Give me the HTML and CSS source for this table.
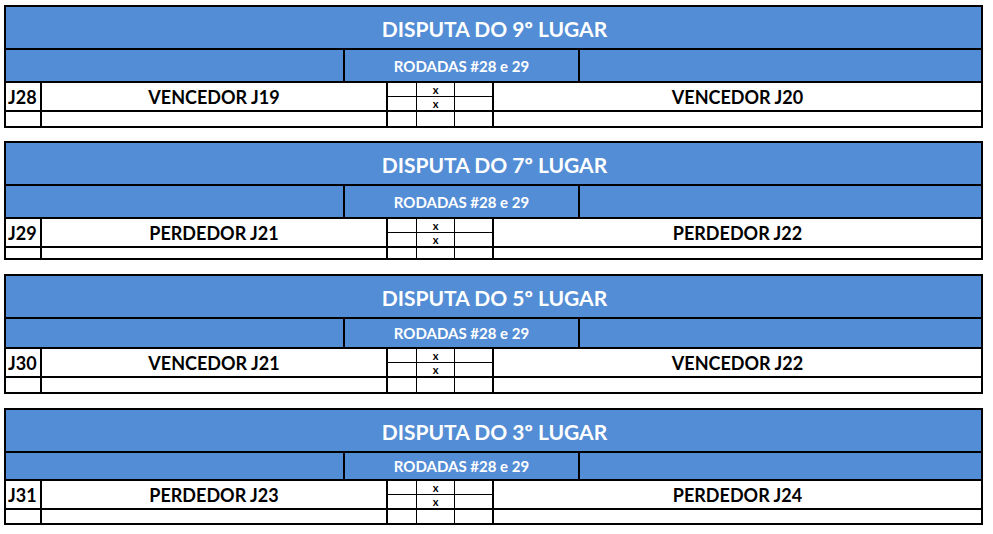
FILE: index.html
```html
<!DOCTYPE html>
<html>
<head>
<meta charset="utf-8">
<link rel="stylesheet" href="styles.css">
</head>
<body>
<div class="sheet">

  <div class="block b1">
    <div class="title">DISPUTA DO 9º LUGAR</div>
    <div class="sub"><div class="c"></div><div class="c">RODADAS #28 e 29</div><div class="c"></div></div>
    <div class="match">
      <div class="c code">J28</div>
      <div class="c name">VENCEDOR J19</div>
      <div class="c mid ma"><div class="h"></div><div class="h"></div></div>
      <div class="c mid mb"><div class="h">x</div><div class="h">x</div></div>
      <div class="c mid mc"><div class="h"></div><div class="h"></div></div>
      <div class="c name">VENCEDOR J20</div>
    </div>
    <div class="blank">
      <div class="c code"></div><div class="c name"></div><div class="c ma"></div><div class="c mb"></div><div class="c mc"></div><div class="c"></div>
    </div>
  </div>

  <div class="block b2">
    <div class="title">DISPUTA DO 7º LUGAR</div>
    <div class="sub"><div class="c"></div><div class="c">RODADAS #28 e 29</div><div class="c"></div></div>
    <div class="match">
      <div class="c code">J29</div>
      <div class="c name">PERDEDOR J21</div>
      <div class="c mid ma"><div class="h"></div><div class="h"></div></div>
      <div class="c mid mb"><div class="h">x</div><div class="h">x</div></div>
      <div class="c mid mc"><div class="h"></div><div class="h"></div></div>
      <div class="c name">PERDEDOR J22</div>
    </div>
    <div class="blank">
      <div class="c code"></div><div class="c name"></div><div class="c ma"></div><div class="c mb"></div><div class="c mc"></div><div class="c"></div>
    </div>
  </div>

  <div class="block b3">
    <div class="title">DISPUTA DO 5º LUGAR</div>
    <div class="sub"><div class="c"></div><div class="c">RODADAS #28 e 29</div><div class="c"></div></div>
    <div class="match">
      <div class="c code">J30</div>
      <div class="c name">VENCEDOR J21</div>
      <div class="c mid ma"><div class="h"></div><div class="h"></div></div>
      <div class="c mid mb"><div class="h">x</div><div class="h">x</div></div>
      <div class="c mid mc"><div class="h"></div><div class="h"></div></div>
      <div class="c name">VENCEDOR J22</div>
    </div>
    <div class="blank">
      <div class="c code"></div><div class="c name"></div><div class="c ma"></div><div class="c mb"></div><div class="c mc"></div><div class="c"></div>
    </div>
  </div>

  <div class="block b4">
    <div class="title">DISPUTA DO 3º LUGAR</div>
    <div class="sub"><div class="c"></div><div class="c">RODADAS #28 e 29</div><div class="c"></div></div>
    <div class="match">
      <div class="c code">J31</div>
      <div class="c name">PERDEDOR J23</div>
      <div class="c mid ma"><div class="h"></div><div class="h"></div></div>
      <div class="c mid mb"><div class="h">x</div><div class="h">x</div></div>
      <div class="c mid mc"><div class="h"></div><div class="h"></div></div>
      <div class="c name">PERDEDOR J24</div>
    </div>
    <div class="blank">
      <div class="c code"></div><div class="c name"></div><div class="c ma"></div><div class="c mb"></div><div class="c mc"></div><div class="c"></div>
    </div>
  </div>

</div>
</body>
</html>
```

FILE: styles.css
```css
* { box-sizing: border-box; }
html, body { margin: 0; padding: 0; background: #ffffff; }
body { font-family: Lato, "Open Sans", sans-serif; font-weight: 700; color: #000; }

.sheet {
  padding: 5px 0 0 4px;
  display: flex;
  flex-direction: column;
}

.block {
  width: 979px;
  border: 2px solid #000;
}
.b1 { margin-bottom: 13px; }
.b2 { margin-bottom: 14px; }
.b3 { margin-bottom: 14px; }

.title {
  height: 43px;
  border-bottom: 2px solid #000;
  background: #538dd5;
  color: #fff;
  font-size: 21px;
  display: flex;
  align-items: center;
  justify-content: center;
  padding-top: 1px;
  padding-left: 2px;
}

.sub {
  display: grid;
  grid-template-columns: 339px 235px 401px;
  height: 33px;
  border-bottom: 2px solid #000;
  background: #538dd5;
  color: #fff;
  font-size: 15px;
}
.b3 .sub { height: 30px; }
.b4 .sub { height: 28px; }
.sub .c { display: flex; align-items: center; justify-content: center; }
.sub .c:nth-child(1), .sub .c:nth-child(2) { border-right: 2px solid #000; }

.match, .blank {
  display: grid;
  grid-template-columns: 36px 346px 29px 38px 39px 487px;
}
.match {
  height: 29px;
  border-bottom: 2px solid #000;
  font-size: 18px;
}
.blank { height: 14px; }
.b2 .blank { height: 10px; }
.b4 .blank { height: 13px; }

.c.code, .c.name { border-right: 2px solid #000; }
.c.ma, .c.mb { border-right: 1px solid #000; }
.c.mc { border-right: 2px solid #000; }

.match .code { display: flex; align-items: center; padding-left: 2px; }
.match .name { display: flex; align-items: center; justify-content: center; }
.match .c:last-child { border-right: none; }

.mid { display: flex; flex-direction: column; }
.mid .h {
  height: 13px;
  font-size: 11px;
  line-height: 13px;
  text-align: center;
}
.mid .h:first-child { border-bottom: 1px solid #000; height: 14px; }
```
